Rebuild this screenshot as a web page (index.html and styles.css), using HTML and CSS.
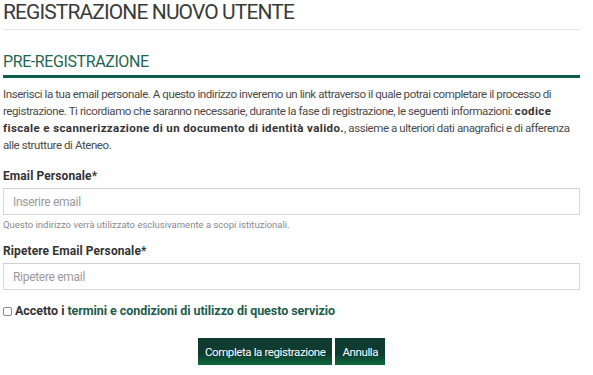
FILE: index.html
```html
<!DOCTYPE html>
<html lang="it">
<head>
<meta charset="utf-8">
<title>Registrazione nuovo utente</title>
<link rel="stylesheet" href="styles.css">
</head>
<body>
<div class="page">
  <h1 class="title">REGISTRAZIONE NUOVO UTENTE</h1>
  <h2 class="section">PRE-REGISTRAZIONE</h2>
  <p class="intro">Inserisci la tua email personale. A questo indirizzo inveremo un link attraverso il quale potrai completare il processo di registrazione. Ti ricordiamo che saranno necessarie, durante la fase di registrazione, le seguenti informazioni: <strong>codice fiscale e scannerizzazione di un documento di identità valido.</strong>, assieme a ulteriori dati anagrafici e di afferenza alle strutture di Ateneo.</p>
  <form class="form">
    <label class="label" for="email">Email Personale*</label>
    <input class="input" id="email" type="email" placeholder="Inserire email">
    <div class="help">Questo indirizzo verrà utilizzato esclusivamente a scopi istituzionali.</div>
    <label class="label label-2" for="email2">Ripetere Email Personale*</label>
    <input class="input" id="email2" type="email" placeholder="Ripetere email">
    <div class="terms">
      <input class="check" type="checkbox" id="terms">
      <label for="terms">Accetto i <a class="link" href="#">termini e condizioni di utilizzo di questo servizio</a></label>
    </div>
    <div class="actions">
      <button class="btn" type="button">Completa la registrazione</button>
      <button class="btn" type="button">Annulla</button>
    </div>
  </form>
</div>
</body>
</html>
```
FILE: styles.css
```css
html, body {
  margin: 0;
  padding: 0;
  background: #fff;
}
body {
  font-family: Roboto, "Noto Sans", sans-serif;
  color: #444;
}
.page {
  width: 577px;
  margin-left: 3px;
}
.title {
  margin: 0;
  font-size: 21px;
  font-weight: 400;
  line-height: 25px;
  letter-spacing: -0.9px;
  color: #3a3a3a;
  padding-bottom: 4px;
  border-bottom: 1px solid #e6e6e6;
}
.section {
  margin: 22px 0 0;
  font-size: 16px;
  font-weight: 400;
  line-height: 20px;
  letter-spacing: -0.4px;
  color: #1f6652;
  padding-bottom: 3px;
  border-bottom: 3px solid #0f5c4b;
}
.intro {
  margin: 8px 0 0;
  font-size: 11.5px;
  line-height: 17px;
  letter-spacing: -0.42px;
  color: #4a4a4a;
}
.intro strong {
  font-weight: 700;
  color: #333;
  letter-spacing: 0.38px;
}
.form {
  display: flex;
  flex-direction: column;
  margin: 14px 0 0;
}
.label {
  font-size: 12px;
  font-weight: 700;
  line-height: 17px;
  color: #333;
  letter-spacing: 0.1px;
}
.label-2 {
  margin-top: 12px;
}
.input {
  box-sizing: border-box;
  margin: 3px 0 0;
  width: 100%;
  height: 27px;
  border: 1px solid #d8d8d8;
  border-top-color: #d0d0d0;
  border-radius: 0;
  padding: 0 9px;
  font-family: Roboto, "Noto Sans", sans-serif;
  font-size: 12px;
  letter-spacing: -0.3px;
  color: #444;
  outline: none;
  background: #fff;
}
.input::placeholder {
  color: #9a9a9a;
}
.help {
  margin-top: 3px;
  font-size: 9.5px;
  line-height: 13px;
  letter-spacing: 0;
  color: #8a8a8a;
}
.terms {
  display: flex;
  align-items: center;
  margin-top: 12px;
  font-size: 12.5px;
  font-weight: 700;
  line-height: 18px;
  color: #333;
  letter-spacing: -0.06px;
}
.check {
  appearance: none;
  -webkit-appearance: none;
  box-sizing: border-box;
  width: 9px;
  height: 9px;
  margin: 1px 3px 0 0;
  border: 1px solid #8a8a8a;
  border-radius: 2px;
  background: #fff;
}
.link {
  color: #1d5c4b;
  text-decoration: none;
}
.actions {
  display: flex;
  justify-content: center;
  gap: 3px;
  margin-top: 18px;
}
.btn {
  box-sizing: border-box;
  height: 27px;
  padding: 0 7px;
  border: none;
  border-radius: 0;
  background: linear-gradient(to bottom, #0f3a30 0%, #0f3c31 60%, #0b6b3b 100%);
  color: #fff;
  font-family: Roboto, "Noto Sans", sans-serif;
  font-size: 11.5px;
  letter-spacing: -0.4px;
  cursor: pointer;
}
```
